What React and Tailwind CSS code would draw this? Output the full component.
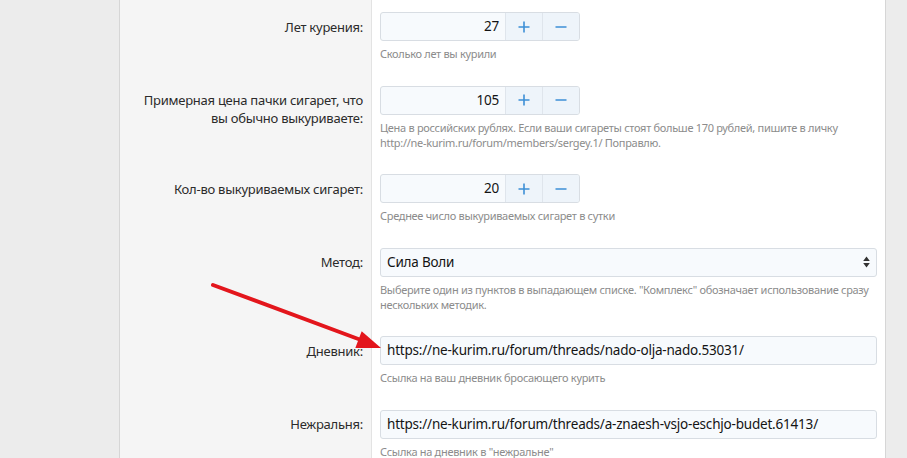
import React from 'react';

const font = { fontFamily: '"Noto Sans", "Open Sans", Arial, sans-serif' };

const Spinner = ({ value }) => (
  <div className="flex h-[29px] w-[200px] rounded-[3px] border border-[#d8dde3] bg-[#f7fafd] overflow-hidden">
    <div className="flex-1 flex items-center justify-end pr-[6px] text-[13.5px] tracking-[-0.2px] text-[#141414]">{value}</div>
    <button className="w-[37px] border-l border-[#dfe5ec] bg-[#eef4fa] flex items-center justify-center">
      <svg width="12" height="12" viewBox="0 0 12 12"><path d="M6 0.5v11M0.5 6h11" stroke="#3c8fd6" strokeWidth="1.6" /></svg>
    </button>
    <button className="w-[37px] border-l border-[#dfe5ec] bg-[#eef4fa] flex items-center justify-center">
      <svg width="12" height="12" viewBox="0 0 12 12"><path d="M0.5 6h11" stroke="#3c8fd6" strokeWidth="1.6" /></svg>
    </button>
  </div>
);

const TextBox = ({ value }) => (
  <div className="flex items-center h-[29px] w-full rounded-[3px] border border-[#d8dde3] bg-[#f7fafd] px-[6px] text-[13.5px] tracking-[-0.2px] text-[#141414] whitespace-nowrap overflow-hidden">
    {value}
  </div>
);

const SelectBox = ({ value }) => (
  <div className="flex items-center justify-between h-[29px] w-full rounded-[3px] border border-[#d8dde3] bg-[#f7fafd] pl-[6px] pr-[6px] text-[13.5px] tracking-[-0.2px] text-[#141414]">
    <span>{value}</span>
    <svg width="7" height="12" viewBox="0 0 7 12">
      <path d="M3.5 0.5L6.8 5H0.2z M3.5 11.5L6.8 7H0.2z" fill="#333" />
    </svg>
  </div>
);

const rows = [
  { label: ['Лет курения:'], field: <Spinner value="27" />, help: ['Сколько лет вы курили'] },
  {
    label: ['Примерная цена пачки сигарет, что', 'вы обычно выкуриваете:'],
    field: <Spinner value="105" />,
    help: [
      'Цена в российских рублях. Если ваши сигареты стоят больше 170 рублей, пишите в личку',
      'http://ne-kurim.ru/forum/members/sergey.1/ Поправлю.',
    ],
  },
  { label: ['Кол-во выкуриваемых сигарет:'], field: <Spinner value="20" />, help: ['Среднее число выкуриваемых сигарет в сутки'] },
  {
    label: ['Метод:'],
    field: <SelectBox value="Сила Воли" />,
    help: [
      'Выберите один из пунктов в выпадающем списке. "Комплекс" обозначает использование сразу',
      'нескольких методик.',
    ],
  },
  {
    label: ['Дневник:'],
    field: <TextBox value="https://ne-kurim.ru/forum/threads/nado-olja-nado.53031/" />,
    help: ['Ссылка на ваш дневник бросающего курить'],
  },
  {
    label: ['Нежральня:'],
    field: <TextBox value="https://ne-kurim.ru/forum/threads/a-znaesh-vsjo-eschjo-budet.61413/" />,
    help: ['Ссылка на дневник в "нежральне"'],
  },
];

export default function App() {
  return (
    <div className="relative flex h-[458px] w-full overflow-hidden bg-[#ececec]" style={font}>
      <div className="w-[119px] shrink-0" />
      <div className="flex flex-col w-[767px] shrink-0 border-l border-r border-[#d6d6d6] bg-white">
        <div className="flex h-[12px] shrink-0">
          <div className="w-[252px] bg-[#f5f5f5] border-r border-[#e3e3e3]" />
          <div className="flex-1" />
        </div>
        {rows.map((row, i) => (
          <div key={i} className="flex shrink-0">
            <div className="w-[252px] shrink-0 bg-[#f5f5f5] border-r border-[#e3e3e3] pr-[8px] pt-[5.5px] text-right text-[13px] tracking-[-0.25px] leading-[18px] text-[#2b2b2b]">
              {row.label.map((l, j) => (
                <div key={j} className="whitespace-nowrap">{l}</div>
              ))}
            </div>
            <div className="flex-1 min-w-0 pl-[8px] pr-[8px] pb-[24.5px]">
              {row.field}
              <div className="mt-[5px] text-[11px] tracking-[-0.3px] leading-[15px] text-[#8c8c8c]">
                {row.help.map((h, j) => (
                  <div key={j} className="whitespace-nowrap">{h}</div>
                ))}
              </div>
            </div>
          </div>
        ))}
        <div className="flex flex-1 shrink-0">
          <div className="w-[252px] bg-[#f5f5f5] border-r border-[#e3e3e3]" />
          <div className="flex-1" />
        </div>
      </div>
      <div className="flex-1" />
      <svg className="absolute left-0 top-0 pointer-events-none" width="907" height="458" viewBox="0 0 907 458">
        <line x1="213" y1="285" x2="361" y2="340" stroke="#e3161c" strokeWidth="4" strokeLinecap="round" />
        <polygon points="381,348 355.3,348 361.7,331.2" fill="#e3161c" />
      </svg>
    </div>
  );
}
